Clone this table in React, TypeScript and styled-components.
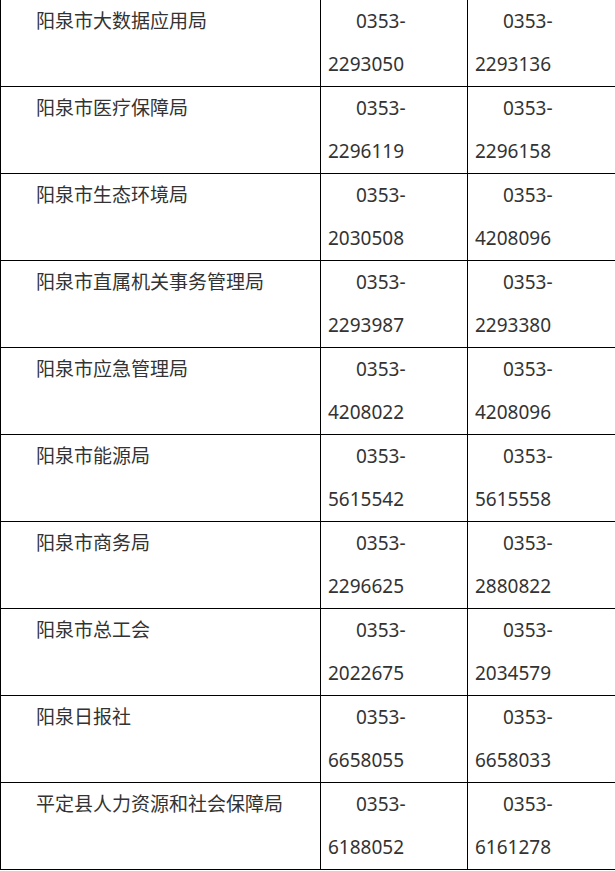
import React from "react";
import styled, { createGlobalStyle } from "styled-components";

const Global = createGlobalStyle`
  html, body { margin: 0; padding: 0; background: #fff; }
  body { overflow: hidden; }
`;

const Table = styled.table`
  border-collapse: collapse;
  table-layout: fixed;
  width: 615px;
  margin-top: -1px;
  font-family: "Noto Sans", "Noto Sans CJK SC", sans-serif;
  font-size: 19px;
  color: #333;
`;

const Cell = styled.td`
  border: 1px solid #000;
  padding: 0 8px 0 7px;
  vertical-align: top;
  line-height: 43px;
  text-indent: 28px;
  white-space: nowrap;
`;

const Line = styled.span<{ $indent?: boolean }>`
  display: block;
  text-indent: ${(p) => (p.$indent ? "28px" : "0")};
`;

type Row = { name: string; a: string; b: string };

const rows: Row[] = [
  { name: "阳泉市大数据应用局", a: "2293050", b: "2293136" },
  { name: "阳泉市医疗保障局", a: "2296119", b: "2296158" },
  { name: "阳泉市生态环境局", a: "2030508", b: "4208096" },
  { name: "阳泉市直属机关事务管理局", a: "2293987", b: "2293380" },
  { name: "阳泉市应急管理局", a: "4208022", b: "4208096" },
  { name: "阳泉市能源局", a: "5615542", b: "5615558" },
  { name: "阳泉市商务局", a: "2296625", b: "2880822" },
  { name: "阳泉市总工会", a: "2022675", b: "2034579" },
  { name: "阳泉日报社", a: "6658055", b: "6658033" },
  { name: "平定县人力资源和社会保障局", a: "6188052", b: "6161278" },
];

function Phone({ num }: { num: string }) {
  return (
    <>
      <Line $indent>0353-</Line>
      <Line>{num}</Line>
    </>
  );
}

export default function App() {
  return (
    <>
      <Global />
      <Table>
        <colgroup>
          <col style={{ width: 320 }} />
          <col style={{ width: 147 }} />
          <col style={{ width: 148 }} />
        </colgroup>
        <tbody>
          {rows.map((r) => (
            <tr key={r.name}>
              <Cell>{r.name}</Cell>
              <Cell>
                <Phone num={r.a} />
              </Cell>
              <Cell>
                <Phone num={r.b} />
              </Cell>
            </tr>
          ))}
        </tbody>
      </Table>
    </>
  );
}
